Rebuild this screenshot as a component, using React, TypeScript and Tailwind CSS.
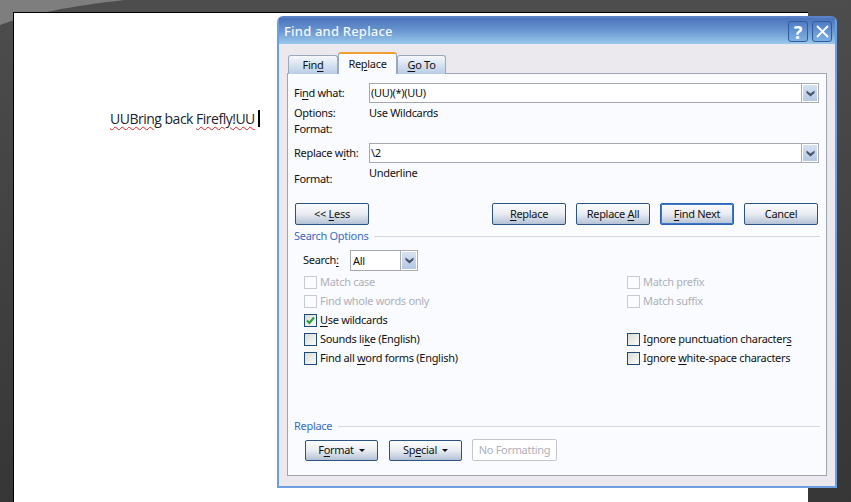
const ui = { fontFamily: '"Noto Sans", "Liberation Sans", sans-serif' };

function U({ children }: { children: string }) {
  return <span className="underline underline-offset-2">{children}</span>;
}

function Btn({ children, w, focus }: { children: React.ReactNode; w: string; focus?: boolean }) {
  return (
    <div
      className={`${w} h-[22px] flex items-center justify-center rounded-[2px] border ${
        focus ? "border-[#2f62b0] shadow-[inset_0_0_0_1px_#3d78c8]" : "border-[#2a5282]"
      } bg-gradient-to-b from-[#fcfcfd] via-[#e9ecf2] to-[#b4c2d6] text-[11px] text-[#111]`}
    >
      <span className="whitespace-pre">{children}</span>
    </div>
  );
}

function Chevron() {
  return (
    <svg width="9" height="7" viewBox="0 0 9 7">
      <path d="M0.5 0.5 L4.5 3.5 L8.5 0.5 V3 L4.5 6.5 L0.5 3 Z" fill="#4a5468" />
    </svg>
  );
}

function DropBtn() {
  return (
    <div className="w-[16px] h-full flex items-center justify-center border border-white bg-gradient-to-b from-[#d6e2f2] to-[#b4c8e4] shadow-[0_0_0_1px_#a8acb4]">
      <Chevron />
    </div>
  );
}

function Combo({ value }: { value: string }) {
  return (
    <div className="ml-auto mr-[7px] w-[450px] h-5 flex items-stretch border border-[#a5a8ae] bg-white text-[11px] text-[#111]">
      <div className="flex-1 pl-[1px] leading-[18px]">{value}</div>
      <DropBtn />
    </div>
  );
}

function Check({ label, disabled, checked }: { label: React.ReactNode; disabled?: boolean; checked?: boolean }) {
  return (
    <div className={`h-[19px] flex items-center gap-[3px] text-[11px] ${disabled ? "text-[#aeb0b8]" : "text-[#111]"}`}>
      <div
        className={`w-[13px] h-[13px] flex items-center justify-center border ${
          disabled ? "border-[#c8cacc] bg-[#fafbff]" : "border-[#1e4a78] bg-gradient-to-br from-[#dcdcd6] to-[#fbfbf9]"
        }`}
      >
        {checked && (
          <svg width="9" height="9" viewBox="0 0 9 9">
            <path d="M1 4.5 L3.4 7 L8 1.5" fill="none" stroke="#22a030" strokeWidth="2" />
          </svg>
        )}
      </div>
      <span>{label}</span>
    </div>
  );
}

function Caret() {
  return <span className="ml-[5px] inline-block border-x-[3px] border-t-[3px] border-x-transparent border-t-[#111] align-middle" />;
}

function SectionTitle({ text }: { text: string }) {
  return (
    <div className="flex items-center gap-[6px] h-4 mr-[6px] pl-[6px] text-[11px] text-[#3a6cc0]">
      <span>{text}</span>
      <div className="flex-1 h-px bg-[#d6d8e0]" />
    </div>
  );
}

export default function App() {
  return (
    <div
      className="relative w-[851px] h-[502px] overflow-hidden bg-gradient-to-b from-[#4d4d4d] to-[#363636] pl-[13px] pt-[12px]"
      style={ui}
    >
      <svg className="absolute left-0 top-0" width="130" height="26" viewBox="0 0 130 26">
        <path d="M0 0 H125 C70 6 30 14 0 25 Z" fill="#7e7e7e" />
      </svg>
      <div className="relative w-[795px] h-[490px] bg-white border-l border-t border-black pt-[96px] pl-[96px]">
        <div className="flex items-center h-[18px] text-[14px] text-[#1c2430] tracking-[-0.5px]" style={{ fontFamily: '"Open Sans", sans-serif' }}>
          <span className="underline decoration-wavy decoration-[#e02020] decoration-1 underline-offset-2">UUBring</span>
          <span>&nbsp;back&nbsp;</span>
          <span className="underline decoration-wavy decoration-[#e02020] decoration-1 underline-offset-2">Firefly!UU</span>
          <span className="ml-[3px] w-[2px] h-[17px] bg-black" />
        </div>
      </div>

      {/* floating dialog window */}
      <div className="absolute left-[277px] top-[16px] w-[560px] h-[472px] flex flex-col rounded-t-[6px] border-2 border-[#6c9fe2] border-t-[#5a83c8] bg-[#ebe8ee] tracking-[-0.3px]">
        <div className="h-[26px] pt-[1px] flex items-center justify-between pl-[5px] pr-[3px] bg-gradient-to-b from-[#4c72bb] via-[#6a97d0] to-[#9ac8ec]">
          <span className="mt-[1px] text-[13px] font-medium text-[#f4f8fc] tracking-[0.2px]">Find and Replace</span>
          <div className="flex gap-[4px]">
            <div className="w-[20px] h-[21px] flex items-center justify-center rounded-[3px] border border-[#2f5c9c] bg-gradient-to-b from-[#4f7cc4] to-[#7fb0e2]">
              <span className="text-[18px] font-bold text-white leading-none">?</span>
            </div>
            <div className="w-[20px] h-[21px] flex items-center justify-center rounded-[3px] border border-[#2f5c9c] bg-gradient-to-b from-[#4f7cc4] to-[#7fb0e2]">
              <svg width="13" height="13" viewBox="0 0 13 13">
                <path d="M1 1 L12 12 M12 1 L1 12" stroke="#fff" strokeWidth="1.8" />
              </svg>
            </div>
          </div>
        </div>

        <div className="flex-1 flex flex-col pt-[8px] pl-[8px] pr-[8px] pb-[10px]">
          <div className="relative z-10 flex items-end h-[22px] pl-[1px] -mb-px text-[11px] text-[#111]">
            <div className="w-[50px] h-[19px] flex items-center justify-center rounded-t-[3px] border border-b-0 border-[#9aa8bc] bg-gradient-to-b from-[#f6f8fb] to-[#b8cce6]">
              <span>Fin<U>d</U></span>
            </div>
            <div className="w-[59px] h-[22px] flex items-center justify-center rounded-t-[3px] border-x border-t-2 border-x-[#9aa8bc] border-t-[#f0a030] bg-[#fafbff]">
              <span>Re<U>p</U>lace</span>
            </div>
            <div className="w-[49px] h-[19px] flex items-center justify-center rounded-t-[3px] border border-b-0 border-[#9aa8bc] bg-gradient-to-b from-[#f6f8fb] to-[#b8cce6]">
              <span><U>G</U>o To</span>
            </div>
          </div>

          <div className="flex-1 flex flex-col border border-[#a0a6b0] bg-[#fafbff] text-[11px] text-[#111]">
            <div className="mt-[9px] h-5 flex items-center pl-[6px]">
              <span>Fi<U>n</U>d what:</span>
              <Combo value="(UU)(*)(UU)" />
            </div>
            <div className="mt-[2px] h-4 flex items-center pl-[6px]">
              <span className="w-[75px]">Options:</span>
              <span>Use Wildcards</span>
            </div>
            <div className="h-4 flex items-center pl-[6px]">Format:</div>
            <div className="mt-[6px] h-5 flex items-center pl-[6px]">
              <span>Replace w<U>i</U>th:</span>
              <Combo value="\2" />
            </div>
            <div className="h-8 flex pl-[6px]">
              <span className="w-[75px] mt-[8px] h-4 leading-4">Format:</span>
              <span className="mt-[2px] h-4 leading-4">Underline</span>
            </div>
            <div className="mt-[8px] flex items-center pl-[7px] pr-[8px]">
              <Btn w="w-[74px]">&lt;&lt; <U>L</U>ess</Btn>
              <div className="ml-auto flex gap-[10px]">
                <Btn w="w-[74px]"><U>R</U>eplace</Btn>
                <Btn w="w-[74px]">Replace <U>A</U>ll</Btn>
                <Btn w="w-[74px]" focus><U>F</U>ind Next</Btn>
                <Btn w="w-[74px]">Cancel</Btn>
              </div>
            </div>
            <div className="mt-[3px]">
              <SectionTitle text="Search Options" />
            </div>
            <div className="mt-[6px] h-[21px] flex items-center pl-[15px]">
              <span className="w-[47px]">Search<U>:</U></span>
              <div className="w-[68px] h-[21px] flex items-stretch border border-[#a5a8ae] bg-white">
                <span className="flex-1 pl-[2px] leading-[19px]">All</span>
                <DropBtn />
              </div>
            </div>
            <div className="mt-[2px] pl-[16px] grid grid-cols-[323px_1fr]">
              <Check disabled label="Match case" />
              <Check disabled label="Match prefix" />
              <Check disabled label="Find whole words only" />
              <Check disabled label="Match suffix" />
              <Check checked label={<><U>U</U>se wildcards</>} />
              <div />
              <Check label={<>Sounds li<U>k</U>e (English)</>} />
              <Check label={<>Ignore punctuation character<U>s</U></>} />
              <Check label={<>Find all <U>w</U>ord forms (English)</>} />
              <Check label={<>Ignore <U>w</U>hite-space characters</>} />
            </div>
            <div className="mt-[50px]">
              <SectionTitle text="Replace" />
            </div>
            <div className="mt-[6px] flex items-center pl-[17px]">
              <div className="w-[73px] h-[21px] flex items-center justify-center rounded-[2px] border border-[#2a5282] bg-gradient-to-b from-[#fcfcfd] via-[#e9ecf2] to-[#b4c2d6]">
                <span>F<U>o</U>rmat</span><Caret />
              </div>
              <div className="ml-[11px] w-[73px] h-[21px] flex items-center justify-center rounded-[2px] border border-[#2a5282] bg-gradient-to-b from-[#fcfcfd] via-[#e9ecf2] to-[#b4c2d6]">
                <span>Sp<U>e</U>cial</span><Caret />
              </div>
              <div className="ml-[10px] w-[85px] h-[22px] -mt-px flex items-center justify-center rounded-[2px] border border-[#c4c6cc] bg-white text-[#aeb0b8]">
                No Formatting
              </div>
            </div>
          </div>
        </div>
      </div>
    </div>
  );
}
